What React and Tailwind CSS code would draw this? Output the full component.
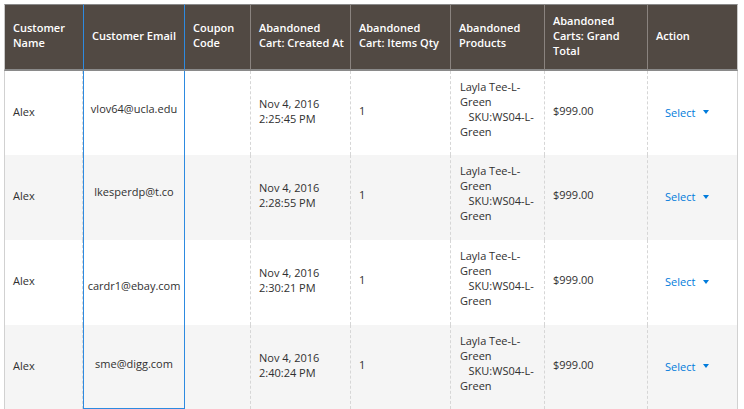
import React from 'react';

const ROWS = [
  { email: 'vlov64@ucla.edu', created: ['Nov 4, 2016', '2:25:45 PM'], h: 'h-[84px]', bg: 'bg-white', emailPad: 'pb-[10px]' },
  { email: 'lkesperdp@t.co', created: ['Nov 4, 2016', '2:28:55 PM'], h: 'h-[85px]', bg: 'bg-[#f5f5f5]', emailPad: 'pb-[12px]' },
  { email: 'cardr1@ebay.com', created: ['Nov 4, 2016', '2:30:21 PM'], h: 'h-[85px]', bg: 'bg-white', emailPad: 'pt-[6px]' },
  { email: 'sme@digg.com', created: ['Nov 4, 2016', '2:40:24 PM'], h: 'h-[84px]', bg: 'bg-[#f5f5f5]', emailPad: 'pb-[7px]' },
];

const HEAD = 'bg-[#514943] text-white font-semibold text-left align-middle border-t border-t-[#8a8a8a] border-b-2 border-b-[#8a8a8a] pl-[8px] pr-[4px] pb-[4px]';
const CELL = 'align-middle px-[8px] border-l border-l-[#d6d6d6] [border-left-style:dashed]';

function SelectLink() {
  return (
    <span className="inline-flex items-center gap-[8px] text-[#007bdb]">
      Select
      <span className="w-0 h-0 border-l-[3px] border-r-[3px] border-t-[4px] border-l-transparent border-r-transparent border-t-[#007bdb]" />
    </span>
  );
}

export default function App() {
  return (
    <div className="w-[744px] h-[409px] overflow-hidden bg-white pl-[4px] pt-[4px] text-[11px] leading-[15px] text-[#303030]" style={{ fontFamily: '"Open Sans", "Liberation Sans", sans-serif' }}>
      <table className="table-fixed border-separate border-spacing-0 w-[734px]">
        <colgroup>
          <col className="w-[79px]" />
          <col className="w-[101px]" />
          <col className="w-[66px]" />
          <col className="w-[100px]" />
          <col className="w-[100px]" />
          <col className="w-[94px]" />
          <col className="w-[103px]" />
          <col className="w-[91px]" />
        </colgroup>
        <thead>
          <tr className="h-[67px]">
            <th className={`${HEAD} border-l border-l-[#c8c8c8]`}>Customer Name</th>
            <th className={`${HEAD} border-l border-l-[#2d8ae0] border-t-[#2d8ae0]`}>Customer Email</th>
            <th className={`${HEAD} border-l border-l-[#2d8ae0]`}>Coupon Code</th>
            <th className={`${HEAD} border-l border-l-[#8a837f]`}>Abandoned Cart: Created At</th>
            <th className={`${HEAD} border-l border-l-[#8a837f]`}>Abandoned Cart: Items Qty</th>
            <th className={`${HEAD} border-l border-l-[#8a837f]`}>Abandoned Products</th>
            <th className={`${HEAD} border-l border-l-[#8a837f]`}>Abandoned Carts: Grand Total</th>
            <th className={`${HEAD} border-l border-l-[#8a837f] border-r border-r-[#c8c8c8]`}>Action</th>
          </tr>
        </thead>
        <tbody>
          {ROWS.map((r, i) => (
            <tr key={r.email} className={`${r.h} ${r.bg}`}>
              <td className="align-middle pl-[8px] pb-[4px] border-l border-l-[#d1d1d1] border-r border-r-[#d6d6d6] [border-right-style:dashed]">Alex</td>
              <td className={`align-middle text-center border-l border-l-[#2d8ae0] ${i === ROWS.length - 1 ? 'border-b border-b-[#2d8ae0]' : ''} ${r.emailPad}`}>
                {r.email}
              </td>
              <td className="align-middle border-l border-l-[#2d8ae0]"></td>
              <td className={`${CELL} pb-[5px]`}>
                {r.created[0]}
                <br />
                {r.created[1]}
              </td>
              <td className={`${CELL} pb-[6px]`}>1</td>
              <td className={`${CELL} pl-[9px] pb-[9px]`}>
                Layla Tee-L-Green
                <br />
                {'\u00a0\u00a0\u00a0SKU:WS04-L-Green'}
              </td>
              <td className={`${CELL} pb-[6px]`}>$999.00</td>
              <td className={`${CELL} pl-[17px] pb-[2px] border-r border-r-[#d1d1d1]`}>
                <SelectLink />
              </td>
            </tr>
          ))}
        </tbody>
      </table>
    </div>
  );
}
